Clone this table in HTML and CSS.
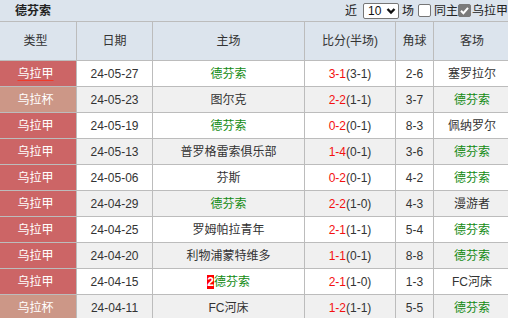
FILE: index.html
```html
<!DOCTYPE html>
<html lang="zh">
<head>
<meta charset="utf-8">
<link rel="stylesheet" href="styles.css">
</head>
<body>
<div class="page">
  <div class="titlebar">
    <div class="title">德芬索</div>
    <div class="controls">
      <span class="lbl">近</span>
      <span class="select">10<svg class="chev" width="10" height="8" viewBox="0 0 10 8"><path d="M1.5 2 L5 5.5 L8.5 2" fill="none" stroke="#111" stroke-width="2.4"/></svg></span>
      <span class="lbl l-chang">场</span>
      <span class="cb"></span>
      <span class="lbl">同主</span>
      <span class="cb checked"><svg width="11" height="11" viewBox="0 0 11 11"><path d="M2 5.8 L4.4 8.2 L9 2.8" fill="none" stroke="#fff" stroke-width="2"/></svg></span>
      <span class="lbl">乌拉甲</span>
      <span class="cb dark"></span>
    </div>
  </div>
  <div class="table">
    <div class="row head">
      <div class="c type">类型</div><div class="c">日期</div><div class="c">主场</div><div class="c">比分(半场)</div><div class="c">角球</div><div class="c">客场</div>
    </div>
    <div class="row odd">
      <div class="c type jia"><span class="ul">乌拉甲</span></div><div class="c">24-05-27</div><div class="c green">德芬索</div><div class="c"><span class="red">3-1</span>(3-1)</div><div class="c">2-6</div><div class="c">塞罗拉尔</div>
    </div>
    <div class="row even">
      <div class="c type bei">乌拉杯</div><div class="c">24-05-23</div><div class="c">图尔克</div><div class="c"><span class="red">2-2</span>(1-1)</div><div class="c">3-7</div><div class="c green">德芬索</div>
    </div>
    <div class="row odd">
      <div class="c type jia">乌拉甲</div><div class="c">24-05-19</div><div class="c green">德芬索</div><div class="c"><span class="red">0-2</span>(0-1)</div><div class="c">8-3</div><div class="c">佩纳罗尔</div>
    </div>
    <div class="row even">
      <div class="c type jia">乌拉甲</div><div class="c">24-05-13</div><div class="c">普罗格雷索俱乐部</div><div class="c"><span class="red">1-4</span>(0-1)</div><div class="c">3-6</div><div class="c green">德芬索</div>
    </div>
    <div class="row odd">
      <div class="c type jia">乌拉甲</div><div class="c">24-05-06</div><div class="c">芬斯</div><div class="c"><span class="red">0-2</span>(0-1)</div><div class="c">4-2</div><div class="c green">德芬索</div>
    </div>
    <div class="row even">
      <div class="c type jia">乌拉甲</div><div class="c">24-04-29</div><div class="c green">德芬索</div><div class="c"><span class="red">2-2</span>(1-0)</div><div class="c">4-3</div><div class="c">漫游者</div>
    </div>
    <div class="row odd">
      <div class="c type jia">乌拉甲</div><div class="c">24-04-25</div><div class="c">罗姆帕拉青年</div><div class="c"><span class="red">2-1</span>(1-1)</div><div class="c">5-4</div><div class="c green">德芬索</div>
    </div>
    <div class="row even">
      <div class="c type jia">乌拉甲</div><div class="c">24-04-20</div><div class="c">利物浦蒙特维多</div><div class="c"><span class="red">1-1</span>(0-1)</div><div class="c">8-8</div><div class="c green">德芬索</div>
    </div>
    <div class="row odd">
      <div class="c type jia">乌拉甲</div><div class="c">24-04-15</div><div class="c green"><span class="card">2</span>德芬索</div><div class="c"><span class="red">2-1</span>(1-0)</div><div class="c">1-3</div><div class="c">FC河床</div>
    </div>
    <div class="row even">
      <div class="c type bei">乌拉杯</div><div class="c">24-04-11</div><div class="c">FC河床</div><div class="c"><span class="red">1-2</span>(1-1)</div><div class="c">5-5</div><div class="c green">德芬索</div>
    </div>
  </div>
</div>
</body>
</html>
```

FILE: styles.css
```css
html, body {
  margin: 0;
  padding: 0;
  overflow: hidden;
  background: #ffffff;
}
body {
  font-family: "Liberation Sans", "Noto Sans CJK SC", sans-serif;
  font-size: 12px;
  color: #333;
}
.page {
  width: 508px;
  height: 318px;
  overflow: hidden;
}
.titlebar {
  display: flex;
  align-items: center;
  height: 21px;
  background: #dce4ed;
  border-bottom: 1px solid #bcbcbc;
  overflow: hidden;
  white-space: nowrap;
}
.title {
  flex: 0 0 345px;
  padding-left: 15px;
  font-weight: bold;
  color: #222;
  line-height: 21px;
  padding-top: 2px;
  box-sizing: border-box;
}
.controls {
  display: flex;
  align-items: center;
  flex: 0 0 auto;
  line-height: 14px;
  color: #222;
}
.lbl {
  display: inline-block;
}
.select {
  display: inline-flex;
  align-items: center;
  box-sizing: border-box;
  width: 36px;
  height: 16px;
  margin-left: 6px;
  padding-left: 4px;
  background: #fff;
  border: 1px solid #767676;
  border-radius: 2px;
  color: #111;
  font-size: 12px;
}
.chev {
  margin-left: 5px;
}
.l-chang {
  margin-left: 3px;
}
.cb {
  display: inline-flex;
  align-items: center;
  justify-content: center;
  box-sizing: border-box;
  width: 13px;
  height: 13px;
  margin-left: 4px;
  margin-right: 3px;
  border: 1px solid #767676;
  border-radius: 2px;
  background: #fff;
}
.cb.checked {
  margin-left: 0;
  margin-right: 1px;
  background: #7b7b7b;
  border-color: #7b7b7b;
}
.cb.dark {
  margin-left: 0;
  border-color: #222;
}
.table {
  display: flex;
  flex-direction: column;
  gap: 1px;
  background: #bcbcbc;
  width: 510px;
}
.row {
  display: grid;
  grid-template-columns: 76px 75px 151px 90px 37px 76px;
  gap: 1px;
  height: 25px;
}
.row.head {
  height: 38px;
}
.c {
  display: flex;
  align-items: center;
  justify-content: center;
  white-space: nowrap;
  line-height: 16px;
  overflow: hidden;
}
.head .c {
  background: #dce4ed;
  color: #333;
}
.odd .c {
  background: #ffffff;
}
.even .c {
  background: #f0f0f0;
}
.c.type {
  padding-right: 5px;
  color: #fff;
}
.odd .c.jia, .even .c.jia {
  background: #cc6566;
}
.odd .c.bei, .even .c.bei {
  background: #cc9787;
}
.head .c.type {
  padding-right: 5px;
  color: #333;
}
.ul {
  text-decoration: underline;
  text-decoration-color: #ee3b2a;
  text-underline-offset: 2px;
}
.green {
  color: #128a12;
}
.red {
  color: #f41010;
}
.card {
  display: inline-block;
  background: #ff0000;
  color: #fff;
  font-weight: bold;
  width: 7px;
  height: 14px;
  line-height: 14px;
  text-align: center;
  font-size: 12px;
  margin-right: 0;
}
```
